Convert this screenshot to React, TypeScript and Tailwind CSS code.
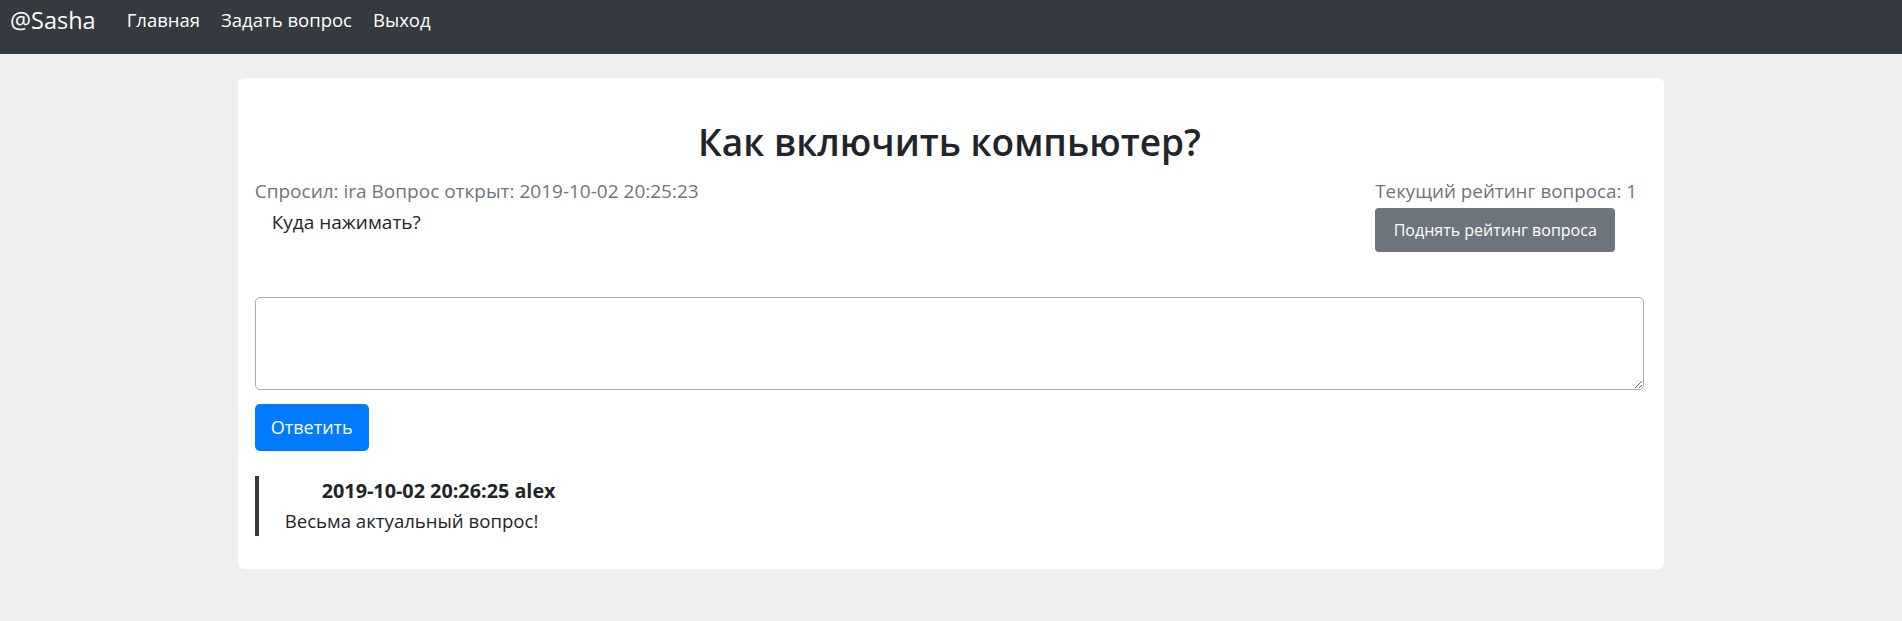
import React from "react";

const font = { fontFamily: '"Open Sans", "Noto Sans", sans-serif' };

const NavBar = () => (
    <nav className="h-[54px] bg-[#343a40] flex items-start pt-[4px] pl-[10px]">
        <span className="text-[23.5px] leading-[32px] text-white mr-[31px]">@Sasha</span>
        <div className="flex items-center gap-[21px] text-[18.5px] leading-[32px] text-white">
            <a href="#">Главная</a>
            <a href="#">Задать вопрос</a>
            <a href="#">Выход</a>
        </div>
    </nav>
);

const Answer = ({ date, author, text }: { date: string; author: string; text: string }) => (
    <div className="border-l-4 border-[#343a40] pl-[26px]">
        <div className="pl-[37px] font-bold text-[19.8px] leading-[30px] text-[#212529]">
            {date} {author}
        </div>
        <div className="text-[18.6px] leading-[30px] text-[#212529]">{text}</div>
    </div>
);

export default function App() {
    return (
        <div className="min-h-[621px] bg-[#efefef]" style={font}>
            <NavBar />
            <div className="w-3/4 mx-auto mt-[24px] bg-white rounded-md pl-[17px] pr-[20px] pt-[40px] pb-[33px]">
                <h1 className="text-center font-semibold text-[37px] leading-[48px] text-[#212529] mb-[11px]">
                    Как включить компьютер?
                </h1>
                <div className="flex justify-between items-start">
                    <div className="flex flex-col">
                        <span className="text-[19px] leading-[28px] text-[#6c757d]">
                            Спросил: ira Вопрос открыт: 2019-10-02 20:25:23
                        </span>
                        <p className="pl-[17px] pt-[3px] text-[19px] leading-[28px] text-[#212529]">
                            Куда нажимать?
                        </p>
                    </div>
                    <div className="w-[269px] flex flex-col items-start">
                        <span className="text-[18.8px] leading-[28px] text-[#6c757d]">
                            Текущий рейтинг вопроса: 1
                        </span>
                        <button className="mt-[3px] h-[44px] w-[240px] rounded-[4px] bg-[#6c757d] text-white text-[16px]">
                            Поднять рейтинг вопроса
                        </button>
                    </div>
                </div>
                <textarea className="mt-[45px] block w-full h-[93px] border border-[#aaaaaa] rounded-[5px] resize-y" />
                <button className="mt-[14px] h-[47px] w-[114px] rounded-[5px] bg-[#007bff] text-white text-[18px]">
                    Ответить
                </button>
                <div className="mt-[25px]">
                    <Answer date="2019-10-02 20:26:25" author="alex" text="Весьма актуальный вопрос!" />
                </div>
            </div>
        </div>
    );
}
